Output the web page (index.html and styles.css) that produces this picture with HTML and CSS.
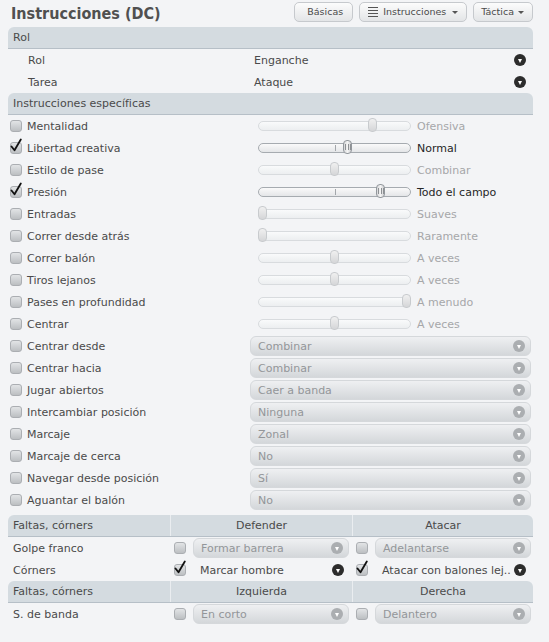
FILE: index.html
```html
<!DOCTYPE html>
<html lang="es">
<head>
<meta charset="utf-8">
<title>Instrucciones (DC)</title>
<link rel="stylesheet" href="styles.css">
</head>
<body>
<div class="page">
  <header class="topbar">
    <h1 class="title">Instrucciones (DC)</h1>
    <nav class="tabs">
      <span class="btn">Básicas</span>
      <span class="btn btn-menu"><svg class="list" width="10" height="10" viewBox="0 0 10 10"><path d="M0 .5h10M0 3.5h10M0 6.5h10M0 9.5h10" stroke="#555" stroke-width="1"/></svg>Instrucciones<i class="caret"></i></span>
      <span class="btn btn-drop">Táctica<i class="caret"></i></span>
    </nav>
  </header>

  <section class="panel">
    <div class="phead">Rol</div>
    <div class="row"><div class="lc ind">Rol</div><div class="val">Enganche<i class="arr dark"></i></div></div>
    <div class="row"><div class="lc ind">Tarea</div><div class="val">Ataque<i class="arr dark"></i></div></div>

    <div class="phead">Instrucciones específicas</div>
    <div class="row"><div class="lc"><span class="cb"></span>Mentalidad</div><div class="sl"><div class="track"><i class="th" style="--v:.762"></i></div><span class="sv">Ofensiva</span></div></div>
    <div class="row"><div class="lc"><span class="cb"><svg width="12" height="14" viewBox="0 0 12 14"><path d="M1.5 8.5L4.5 12.3L10.8 1.5" fill="none" stroke="#111" stroke-width="1.8" stroke-linecap="round" stroke-linejoin="round"/></svg></span>Libertad creativa</div><div class="sl on"><div class="track"><b class="tick"></b><i class="th" style="--v:.589"></i></div><span class="sv">Normal</span></div></div>
    <div class="row"><div class="lc"><span class="cb"></span>Estilo de pase</div><div class="sl"><div class="track"><i class="th" style="--v:.5"></i></div><span class="sv">Combinar</span></div></div>
    <div class="row"><div class="lc"><span class="cb"><svg width="12" height="14" viewBox="0 0 12 14"><path d="M1.5 8.5L4.5 12.3L10.8 1.5" fill="none" stroke="#111" stroke-width="1.8" stroke-linecap="round" stroke-linejoin="round"/></svg></span>Presión</div><div class="sl on"><div class="track"><b class="tick"></b><i class="th" style="--v:.816"></i></div><span class="sv">Todo el campo</span></div></div>
    <div class="row"><div class="lc"><span class="cb"></span>Entradas</div><div class="sl"><div class="track"><i class="th" style="--v:0"></i></div><span class="sv">Suaves</span></div></div>
    <div class="row"><div class="lc"><span class="cb"></span>Correr desde atrás</div><div class="sl"><div class="track"><i class="th" style="--v:0"></i></div><span class="sv">Raramente</span></div></div>
    <div class="row"><div class="lc"><span class="cb"></span>Correr balón</div><div class="sl"><div class="track"><i class="th" style="--v:.5"></i></div><span class="sv">A veces</span></div></div>
    <div class="row"><div class="lc"><span class="cb"></span>Tiros lejanos</div><div class="sl"><div class="track"><i class="th" style="--v:.5"></i></div><span class="sv">A veces</span></div></div>
    <div class="row"><div class="lc"><span class="cb"></span>Pases en profundidad</div><div class="sl"><div class="track"><i class="th" style="--v:1"></i></div><span class="sv">A menudo</span></div></div>
    <div class="row"><div class="lc"><span class="cb"></span>Centrar</div><div class="sl"><div class="track"><i class="th" style="--v:.5"></i></div><span class="sv">A veces</span></div></div>

    <div class="row"><div class="lc"><span class="cb"></span>Centrar desde</div><div class="dd">Combinar<i class="arr"></i></div></div>
    <div class="row"><div class="lc"><span class="cb"></span>Centrar hacia</div><div class="dd">Combinar<i class="arr"></i></div></div>
    <div class="row"><div class="lc"><span class="cb"></span>Jugar abiertos</div><div class="dd">Caer a banda<i class="arr"></i></div></div>
    <div class="row"><div class="lc"><span class="cb"></span>Intercambiar posición</div><div class="dd">Ninguna<i class="arr"></i></div></div>
    <div class="row"><div class="lc"><span class="cb"></span>Marcaje</div><div class="dd">Zonal<i class="arr"></i></div></div>
    <div class="row"><div class="lc"><span class="cb"></span>Marcaje de cerca</div><div class="dd">No<i class="arr"></i></div></div>
    <div class="row"><div class="lc"><span class="cb"></span>Navegar desde posición</div><div class="dd">Sí<i class="arr"></i></div></div>
    <div class="row"><div class="lc"><span class="cb"></span>Aguantar el balón</div><div class="dd">No<i class="arr"></i></div></div>
  </section>

  <section class="sp">
    <div class="thead"><div class="c1">Faltas, córners</div><div class="ch">Defender</div><div class="ch">Atacar</div></div>
    <div class="trow">
      <div class="c1">Golpe franco</div>
      <div class="c2"><span class="cb"></span><div class="dd">Formar barrera<i class="arr"></i></div></div>
      <div class="c3"><span class="cb"></span><div class="dd">Adelantarse<i class="arr"></i></div></div>
    </div>
    <div class="trow">
      <div class="c1">Córners</div>
      <div class="c2"><span class="cb"><svg width="12" height="14" viewBox="0 0 12 14"><path d="M1.5 8.5L4.5 12.3L10.8 1.5" fill="none" stroke="#111" stroke-width="1.8" stroke-linecap="round" stroke-linejoin="round"/></svg></span><div class="plain">Marcar hombre<i class="arr dark"></i></div></div>
      <div class="c3"><span class="cb"><svg width="12" height="14" viewBox="0 0 12 14"><path d="M1.5 8.5L4.5 12.3L10.8 1.5" fill="none" stroke="#111" stroke-width="1.8" stroke-linecap="round" stroke-linejoin="round"/></svg></span><div class="plain">Atacar con balones lej..<i class="arr dark"></i></div></div>
    </div>
    <div class="thead"><div class="c1">Faltas, córners</div><div class="ch">Izquierda</div><div class="ch">Derecha</div></div>
    <div class="trow">
      <div class="c1">S. de banda</div>
      <div class="c2"><span class="cb"></span><div class="dd">En corto<i class="arr"></i></div></div>
      <div class="c3"><span class="cb"></span><div class="dd">Delantero<i class="arr"></i></div></div>
    </div>
  </section>
</div>
</body>
</html>
```

FILE: styles.css
```css
* { box-sizing: border-box; }
html, body { margin: 0; padding: 0; }
body {
  background: #f3f4f6;
  color: #4a4a4a;
  font-family: "DejaVu Sans", Verdana, sans-serif;
  font-size: 11px;
  line-height: 1;
  width: 549px;
  height: 642px;
  overflow: hidden;
}
.page { width: 533px; padding-left: 8px; }

.topbar { height: 27px; display: flex; justify-content: space-between; align-items: flex-start; }
.title {
  margin: 0 0 0 3px;
  font-family: "DejaVu Sans Condensed", "DejaVu Sans", sans-serif;
  font-weight: bold;
  font-size: 16px;
  line-height: 27px;
  color: #505050;
}
.tabs { display: flex; gap: 6px; margin-top: 2px; }
.btn {
  display: flex; align-items: center;
  height: 20px;
  padding: 0 9px 0 12px;
  border: 1px solid #c6c9cd;
  border-radius: 5px;
  background: linear-gradient(#fcfcfc, #e3e5e7);
  font-size: 9.5px;
  color: #4a4a4a;
}
.btn-menu { padding: 0 8px; gap: 5px; }
.btn-menu .caret { margin-left: 1px; }
.btn-drop { padding: 0 8px 0 7px; gap: 4px; }
.caret {
  width: 0; height: 0;
  border-left: 3px solid transparent;
  border-right: 3px solid transparent;
  border-top: 3px solid #555;
}

.phead {
  height: 22px;
  display: flex; align-items: center;
  padding-left: 5px;
  background: #d4dbe0;
  border-bottom: 1px solid #b6bfc7;
  border-radius: 6px 6px 0 0;
}
.row { height: 22px; display: flex; align-items: center; }
.lc { width: 242px; flex: none; display: flex; align-items: center; gap: 5px; padding-left: 2px; }
.lc.ind { padding-left: 20px; }
.val { flex: 1; display: flex; align-items: center; justify-content: space-between; padding: 0 7px 0 4px; }

.arr {
  display: block; flex: none;
  width: 12px; height: 12px;
  border-radius: 50%;
  background: #abaeb1;
  position: relative;
}
.arr::after {
  content: "";
  position: absolute; left: 3.5px; top: 4.5px;
  border-left: 2.5px solid transparent;
  border-right: 2.5px solid transparent;
  border-top: 4px solid #fff;
}
.arr.dark { background: #2c2c2c; }

.cb {
  flex: none;
  width: 12px; height: 12px;
  border: 1px solid #abaeb2;
  border-radius: 3px;
  background: linear-gradient(#e2e4e6, #bcbfc2);
  position: relative;
}
.cb svg { position: absolute; left: -1px; top: -5px; }

.sl { display: flex; align-items: center; margin-left: 8px; }
.track {
  position: relative;
  width: 153px; height: 10px;
  border: 1px solid #d8dbde;
  border-radius: 5px;
  background: linear-gradient(#f9fafb, #eceef0);
}
.th {
  position: absolute;
  top: -4px;
  left: calc(-1px + var(--v) * (100% - 7px));
  width: 9px; height: 14px;
  border: 1px solid #c8cbce;
  border-radius: 4px;
  background: linear-gradient(#f0f0f0, #d5d6d8);
}
.sv { margin-left: 6px; color: #a6a7a9; }
.sl.on .track { border-color: #a6abb0; background: linear-gradient(#fafafa, #e4e6e8); }
.sl.on .th { border-color: #92979c; background: linear-gradient(90deg, #d6d7d9, #f4f4f4 50%, #d0d1d3); }
.sl.on .th::after {
  content: "";
  position: absolute; left: 1.5px; top: 3px;
  width: 4px; height: 6px;
  border-left: 1px solid #8e9194;
  border-right: 1px solid #8e9194;
  background: linear-gradient(#8e9194, #8e9194) center / 1px 100% no-repeat;
}
.tick { position: absolute; left: 76px; top: 1px; width: 1px; height: 6px; background: #a3a7ab; }
.sl.on .sv { color: #262626; }

.dd {
  flex: 1;
  height: 20px;
  display: flex; align-items: center; justify-content: space-between;
  padding: 0 5px 0 7px;
  margin-right: 2px;
  border: 1px solid #d5d8db;
  border-radius: 6px;
  background: linear-gradient(#eff0f2, #d4d7da);
  color: #939699;
}

.sp { margin-top: 4px; }
.thead, .trow { display: grid; grid-template-columns: 162px 182px 181px; height: 22px; }
.thead { background: #d4dbe0; border-bottom: 1px solid #b6bfc7; border-radius: 6px 6px 0 0; }
.thead > div, .trow > div { display: flex; align-items: center; }
.c1 { padding-left: 5px; }
.ch { justify-content: center; border-left: 1px solid #eaedf0; }
.c2 { padding: 0 3px 0 4px; gap: 7px; }
.c3 { padding: 0 2px 0 4px; gap: 7px; }
.c2 .dd, .c3 .dd { margin-right: 0; }
.plain { flex: 1; display: flex; align-items: center; justify-content: space-between; padding: 0 5px 0 7px; }
.c3 .plain { padding-right: 5px; }
```
